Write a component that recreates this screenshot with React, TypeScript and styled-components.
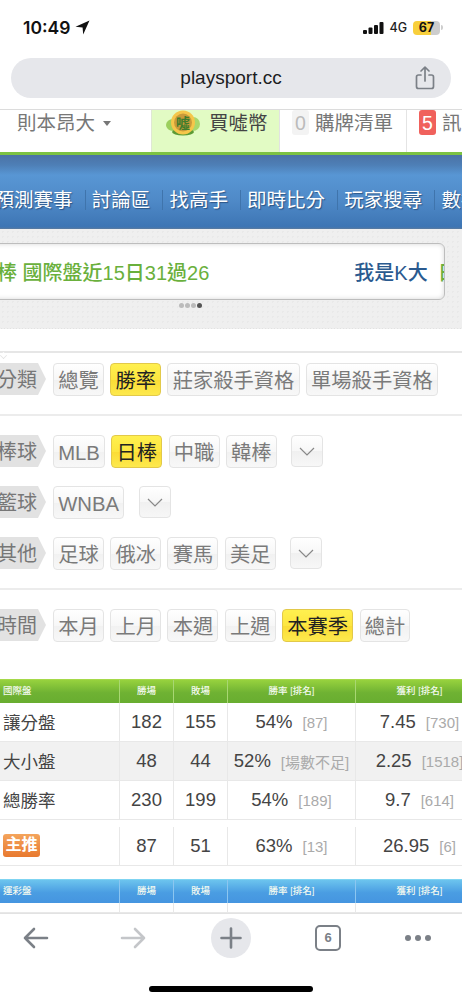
import styled, { createGlobalStyle } from 'styled-components';

const GlobalStyle = createGlobalStyle`
  html, body {
    margin: 0;
    padding: 0;
    background: #fff;
  }
  body {
    font-family: 'Liberation Sans', 'Noto Sans CJK TC', sans-serif;
  }
`;

const Screen = styled.div`
  width: 462px;
  height: 1000px;
  overflow: hidden;
  display: flex;
  flex-direction: column;
  background: #fff;
`;

const StatusBar = styled.div`
  height: 58px;
  flex: none;
  display: flex;
  align-items: center;
  padding: 0 19px 3px 23px;
  box-sizing: border-box;
`;

const Clock = styled.span`
  font-family: Inter, sans-serif;
  font-size: 17.5px;
  font-weight: 600;
  color: #111;
  margin-right: 5px;
`;

const StatusRight = styled.div`
  margin-left: auto;
  display: flex;
  align-items: center;
`;

const NetworkLabel = styled.span`
  font-family: Inter, sans-serif;
  font-size: 12.5px;
  font-weight: 500;
  color: #222;
  margin: 0 6px 0 5px;
`;

const Battery = styled.div`
  width: 27px;
  height: 14px;
  border-radius: 4px;
  background: linear-gradient(90deg, #f8cf3c 67%, #cdcdcd 67%);
  font-family: Inter, sans-serif;
  font-size: 12.5px;
  font-weight: 700;
  line-height: 14px;
  text-align: center;
  color: #111;
`;

const BatteryNub = styled.div`
  width: 2px;
  height: 5px;
  margin-left: 1px;
  border-radius: 0 2px 2px 0;
  background: #cdcdcd;
`;

const UrlWrap = styled.div`
  height: 51px;
  flex: none;
  padding: 0 11px;
  box-sizing: border-box;
`;

const UrlBar = styled.div`
  position: relative;
  height: 40px;
  border-radius: 20px;
  background: #e6e7eb;
  display: flex;
  align-items: center;
  justify-content: center;
  font-size: 19px;
  color: #1c1c1e;
`;

const ShareButton = styled.span`
  position: absolute;
  right: 16px;
  top: 8px;
  line-height: 0;
`;

const TopNav = styled.div`
  height: 46px;
  flex: none;
  box-sizing: border-box;
  display: flex;
  border-top: 1px solid #dcdcdc;
  border-bottom: 3px solid #7cc242;
  font-size: 19.5px;
  color: #777;
  overflow: hidden;
`;

const UserCell = styled.div`
  width: 151px;
  flex: none;
  padding: 0 0 0 17px;
  box-sizing: border-box;
  display: flex;
  align-items: flex-start;
  line-height: 26px;
`;

const Caret = styled.span`
  width: 0;
  height: 0;
  margin: 11px 0 0 8px;
  border-left: 4px solid transparent;
  border-right: 4px solid transparent;
  border-top: 5px solid #777;
`;

const BuyCell = styled.div`
  width: 129px;
  flex: none;
  box-sizing: border-box;
  padding-left: 14px;
  display: flex;
  gap: 9px;
  line-height: 26px;
  background: #e2fbc4;
  border-left: 1px solid #dfe8d4;
  border-right: 1px solid #e2e2e2;
  color: #444;
`;

const CountCell = styled.div<{ $width: number }>`
  width: ${(p) => p.$width}px;
  flex: none;
  box-sizing: border-box;
  padding-left: 12px;
  display: flex;
  gap: 6px;
  line-height: 26px;
  border-right: 1px solid #e4e4e4;
  white-space: nowrap;
`;

const CountBadge = styled.span<{ $alert?: boolean }>`
  width: 17px;
  height: 25px;
  border-radius: 3px;
  text-align: center;
  background: ${(p) => (p.$alert ? '#f0615c' : '#f3f3f3')};
  color: ${(p) => (p.$alert ? '#fff' : '#bbb')};
`;

const MainNav = styled.div`
  height: 74px;
  flex: none;
  box-sizing: border-box;
  padding-top: 35px;
  display: flex;
  align-items: flex-start;
  background: linear-gradient(180deg, #4a72a6 0, #4e7fb6 10px, #5896d4 20px, #4f8ac8 45px, #3d75b4 72px, #5c7b9e 74px);
  overflow: hidden;
`;

const MainNavList = styled.div`
  margin-left: -5.5px;
  display: flex;
  white-space: nowrap;
`;

const MainNavItem = styled.span`
  padding-right: 12px;
  margin-right: 6.2px;
  font-size: 19.5px;
  line-height: 20px;
  color: #fff;
  text-shadow: 1px 1px 1px rgba(20, 50, 90, 0.6);
  border-right: 1px solid #3f74ac;
`;

const TickerBand = styled.div`
  height: 97px;
  flex: none;
  box-sizing: border-box;
  padding-top: 14px;
  background-color: #efefef;
  background-image: radial-gradient(#e9e9e9 1px, transparent 1px);
  background-size: 5px 5px;
`;

const TickerCard = styled.div`
  width: 455px;
  height: 57px;
  margin-left: -10px;
  box-sizing: border-box;
  padding-left: 6px;
  display: flex;
  align-items: center;
  background: #fff;
  border: 1px solid #bdbdbd;
  border-radius: 6px;
  box-shadow: inset 0 0 5px rgba(0, 0, 0, 0.16);
  overflow: hidden;
  white-space: nowrap;
  font-size: 20px;
  font-weight: 500;
`;

const TickerGreen = styled.span`
  flex: none;
  color: #6ab03c;
`;

const TickerBlue = styled.span`
  flex: none;
  color: #2a5a8f;
  margin: 0 10px 0 145px;
`;

const TickerDots = styled.div`
  margin-top: 3px;
  display: flex;
  justify-content: center;
  padding-right: 80px;
`;

const TickerDot = styled.span<{ $active?: boolean }>`
  width: 5px;
  height: 5px;
  border-radius: 50%;
  margin-right: 1px;
  background: ${(p) => (p.$active ? '#555' : '#bbb')};
`;

const WavyEdge = styled.div`
  height: 4px;
  flex: none;
  background-color: #fff;
  background-image: radial-gradient(circle at 3px -1px, #efefef 3.5px, #d9d9d9 4px, transparent 4.5px);
  background-size: 6px 4px;
`;

const FilterPanel = styled.div`
  position: relative;
  margin-top: 21px;
  flex: none;
  border-top: 2px solid #e6e6e6;
  padding-top: 10px;

  &::before {
    content: '';
    position: absolute;
    left: 0;
    top: -1px;
    width: 6px;
    height: 6px;
    background: #fff;
    border-right: 1px solid #e0e0e0;
    border-bottom: 1px solid #e0e0e0;
    transform: rotate(45deg) scale(0.7);
  }
`;

const FilterGroup = styled.div<{ $last?: boolean }>`
  display: flex;
  flex-direction: column;
  gap: 18px;
  padding-bottom: ${(p) => (p.$last ? 0 : 18)}px;
  margin-bottom: ${(p) => (p.$last ? 0 : 19)}px;
  border-bottom: ${(p) => (p.$last ? 'none' : '2px solid #ececec')};
`;

const FilterRow = styled.div`
  height: 33px;
  display: flex;
  gap: 6.3px;
  white-space: nowrap;
`;

const FilterLabel = styled.div`
  width: 49px;
  height: 32px;
  flex: none;
  margin: 0 0.7px 0 -3px;
  font-size: 20px;
  line-height: 34px;
  color: #777;
  background: #e2e2e2;
  clip-path: polygon(0 0, 41px 0, 100% 50%, 41px 100%, 0 100%);
`;

const FilterButton = styled.span<{ $active?: boolean }>`
  height: 33px;
  box-sizing: border-box;
  padding: 0 4.2px;
  border-radius: 4px;
  font-size: 20.3px;
  line-height: 34px;
  text-align: center;
  border: 1px solid ${(p) => (p.$active ? '#e2c94a' : '#e4e4e4')};
  color: ${(p) => (p.$active ? '#222' : '#7a7a7a')};
  background: ${(p) =>
    p.$active
      ? 'linear-gradient(180deg, #fff04f 0, #fde640 50%, #fbdc35 51%, #fde94d 100%)'
      : 'linear-gradient(180deg, #fff 0, #f7f7f7 50%, #f1f1f1 51%, #f8f8f8 100%)'};
`;

const ExpandButton = styled.span<{ $gap: number }>`
  width: 32px;
  height: 32px;
  box-sizing: border-box;
  margin-left: ${(p) => p.$gap}px;
  display: flex;
  align-items: center;
  justify-content: center;
  border: 1px solid #e4e4e4;
  border-radius: 4px;
  background: linear-gradient(180deg, #fff 0, #f7f7f7 50%, #f0f0f0 51%, #f7f7f7 100%);
`;

const TableArea = styled.div`
  margin-top: 37px;
  width: 484px;
  flex: none;
`;

const COLUMNS = '120px 54px 54px 128px 128px';

const HeaderRow = styled.div<{ $tone: 'green' | 'blue' }>`
  height: 24px;
  display: grid;
  grid-template-columns: ${COLUMNS};
  border-top: 1px solid ${(p) => (p.$tone === 'green' ? '#a5d94a' : '#7fd4f2')};
  box-sizing: border-box;
  background: ${(p) =>
    p.$tone === 'green'
      ? 'linear-gradient(180deg, #97d23e 0, #6fb233 55%, #68ad30 100%)'
      : 'linear-gradient(180deg, #6cc4ee 0, #4a9de2 55%, #4595e0 100%)'};
`;

const HeaderCell = styled.div<{ $tone: 'green' | 'blue'; $left?: boolean }>`
  font-size: 9.5px;
  font-weight: 500;
  line-height: 22px;
  color: #f4faf0;
  text-align: ${(p) => (p.$left ? 'left' : 'center')};
  padding-left: ${(p) => (p.$left ? 3 : 0)}px;
  box-sizing: border-box;
  border-right: 1px solid ${(p) => (p.$tone === 'green' ? '#a8d773' : '#8cc6f0')};
`;

const DataRow = styled.div<{ $shaded?: boolean; $height: number }>`
  height: ${(p) => p.$height}px;
  box-sizing: border-box;
  display: grid;
  grid-template-columns: ${COLUMNS};
  border-bottom: 1px solid #e8e8e8;
  background: ${(p) => (p.$shaded ? '#f1f1f1' : '#fff')};
`;

const RowLabel = styled.div`
  padding: 0 0 2px 3px;
  display: flex;
  align-items: center;
  font-size: 17.5px;
  color: #444;
  border-right: 1px solid #e8e8e8;
`;

const NumberCell = styled.div`
  display: flex;
  align-items: center;
  justify-content: center;
  gap: 10px;
  font-size: 18.5px;
  color: #444;
  border-right: 1px solid #e8e8e8;
  white-space: nowrap;
`;

const RankNote = styled.span`
  font-size: 15px;
  color: #aaa;
`;

const PickBadge = styled.span`
  width: 37px;
  height: 23px;
  border-radius: 3px;
  background: linear-gradient(180deg, #f4a45c 0, #e8792f 100%);
  color: #fff;
  font-size: 16px;
  font-weight: 700;
  line-height: 22px;
  text-align: center;
`;

const TableGap = styled.div<{ $height: number }>`
  height: ${(p) => p.$height}px;
`;

const Toolbar = styled.div`
  position: relative;
  flex: none;
  margin-top: auto;
  height: 88px;
  box-sizing: border-box;
  border-top: 1px solid #e2e2e2;
  background: #fff;
  z-index: 1;
`;

const ToolbarIcons = styled.div`
  height: 48px;
  display: grid;
  grid-template-columns: 97px 91px 104px 90px 26px;
  align-items: center;
  padding-left: 23px;
`;

const IconSlot = styled.span`
  line-height: 0;
  display: flex;
  align-items: center;
`;

const NewTabButton = styled.span`
  width: 40px;
  height: 40px;
  border-radius: 50%;
  background: #e6e7eb;
  display: flex;
  align-items: center;
  justify-content: center;
`;

const TabCount = styled.span`
  width: 26px;
  height: 26px;
  box-sizing: border-box;
  border: 2.5px solid #7b8087;
  border-radius: 5px;
  font-size: 13px;
  font-weight: 700;
  line-height: 21px;
  text-align: center;
  color: #7b8087;
`;

const HomeBar = styled.div`
  width: 164px;
  height: 6px;
  margin: 24px auto 0;
  border-radius: 3px;
  background: #000;
`;

const LocationIcon = () => (
  <svg width="15" height="15" viewBox="0 0 15 15">
    <path d="M14.5 0.5 L0.5 6.8 L7.6 7.4 L8.2 14.5 Z" fill="#111" />
  </svg>
);

const SignalIcon = () => (
  <svg width="21" height="12" viewBox="0 0 21 12">
    <rect x="0" y="8" width="4" height="4" rx="1" fill="#111" />
    <rect x="5.5" y="5.5" width="4" height="6.5" rx="1" fill="#111" />
    <rect x="11" y="3" width="4" height="9" rx="1" fill="#111" />
    <rect x="16.5" y="0" width="4" height="12" rx="1" fill="#111" />
  </svg>
);

const ShareIcon = () => (
  <svg width="20" height="24" viewBox="0 0 20 24" fill="none" stroke="#7b8087" strokeWidth="1.7" strokeLinecap="round" strokeLinejoin="round">
    <path d="M6 9 H3.5 Q1.5 9 1.5 11 V20.5 Q1.5 22.5 3.5 22.5 H16.5 Q18.5 22.5 18.5 20.5 V11 Q18.5 9 16.5 9 H14" />
    <path d="M10 15 V1.5 M6 5 L10 1.2 L14 5" />
  </svg>
);

const CoinLogo = () => (
  <svg width="34" height="26" viewBox="0 0 34 26">
    <ellipse cx="7" cy="15" rx="7" ry="6" fill="#9ccf5e" />
    <ellipse cx="27" cy="14" rx="7" ry="7" fill="#a9d86c" />
    <ellipse cx="17" cy="22" rx="11" ry="3.5" fill="#5c9a35" />
    <circle cx="17" cy="12.5" r="12" fill="#f5c64a" />
    <circle cx="17" cy="12.5" r="9" fill="#c99a3a" />
    <text x="17" y="18" fontSize="14" fontWeight="700" fill="#3f7d2c" textAnchor="middle">噓</text>
  </svg>
);

const ChevronIcon = () => (
  <svg width="16" height="9" viewBox="0 0 16 9" fill="none" stroke="#888" strokeWidth="1.2">
    <path d="M1 1 L8 8 L15 1" />
  </svg>
);

const BackIcon = () => (
  <svg width="26" height="22" viewBox="0 0 26 22" fill="none" stroke="#7b8087" strokeWidth="2.6" strokeLinecap="round" strokeLinejoin="round">
    <path d="M2 11 H24 M11 2 L2 11 L11 20" />
  </svg>
);

const ForwardIcon = () => (
  <svg width="26" height="22" viewBox="0 0 26 22" fill="none" stroke="#c4c6c9" strokeWidth="2.6" strokeLinecap="round" strokeLinejoin="round">
    <path d="M2 11 H24 M15 2 L24 11 L15 20" />
  </svg>
);

const PlusIcon = () => (
  <svg width="22" height="22" viewBox="0 0 22 22" stroke="#7b8087" strokeWidth="2.6" strokeLinecap="round">
    <path d="M11 1.5 V20.5 M1.5 11 H20.5" />
  </svg>
);

const MoreIcon = () => (
  <svg width="26" height="6" viewBox="0 0 26 6" fill="#7b8087">
    <circle cx="3" cy="3" r="3" />
    <circle cx="13" cy="3" r="3" />
    <circle cx="23" cy="3" r="3" />
  </svg>
);

const navItems = ['預測賽事', '討論區', '找高手', '即時比分', '玩家搜尋', '數據'];

const filterGroups = [
  [{ label: '分類', items: ['總覽', '勝率', '莊家殺手資格', '單場殺手資格'], active: '勝率' }],
  [
    { label: '棒球', items: ['MLB', '日棒', '中職', '韓棒'], active: '日棒', more: 8 },
    { label: '籃球', items: ['WNBA'], more: 8 },
    { label: '其他', items: ['足球', '俄冰', '賽馬', '美足'], more: 8 }
  ],
  [{ label: '時間', items: ['本月', '上月', '本週', '上週', '本賽季', '總計'], active: '本賽季' }]
];

const tableHead = ['勝場', '敗場', '勝率 [排名]', '獲利 [排名]'];

const stats = [
  { label: '讓分盤', win: 182, lose: 155, rate: '54%', rateRank: '[87]', profit: '7.45', profitRank: '[730]' },
  { label: '大小盤', win: 48, lose: 44, rate: '52%', rateRank: '[場數不足]', profit: '2.25', profitRank: '[1518]', shaded: true },
  { label: '總勝率', win: 230, lose: 199, rate: '54%', rateRank: '[189]', profit: '9.7', profitRank: '[614]' }
];

const App = () => (
  <Screen>
    <GlobalStyle />
    <StatusBar>
      <Clock>10:49</Clock>
      <LocationIcon />
      <StatusRight>
        <SignalIcon />
        <NetworkLabel>4G</NetworkLabel>
        <Battery>67</Battery>
        <BatteryNub />
      </StatusRight>
    </StatusBar>

    <UrlWrap>
      <UrlBar>
        playsport.cc
        <ShareButton>
          <ShareIcon />
        </ShareButton>
      </UrlBar>
    </UrlWrap>

    <TopNav>
      <UserCell>
        則本昂大
        <Caret />
      </UserCell>
      <BuyCell>
        <CoinLogo />
        買噓幣
      </BuyCell>
      <CountCell $width={127}>
        <CountBadge>0</CountBadge>
        購牌清單
      </CountCell>
      <CountCell $width={80}>
        <CountBadge $alert>5</CountBadge>
        訊息
      </CountCell>
    </TopNav>

    <MainNav>
      <MainNavList>
        {navItems.map((item) => (
          <MainNavItem key={item}>{item}</MainNavItem>
        ))}
      </MainNavList>
    </MainNav>

    <TickerBand>
      <TickerCard>
        <TickerGreen>棒 國際盤近15日31過26</TickerGreen>
        <TickerBlue>我是K大</TickerBlue>
        <TickerGreen>日棒</TickerGreen>
      </TickerCard>
      <TickerDots>
        <TickerDot />
        <TickerDot />
        <TickerDot />
        <TickerDot $active />
      </TickerDots>
    </TickerBand>
    <WavyEdge />

    <FilterPanel>
      {filterGroups.map((group, index) => (
        <FilterGroup key={group[0].label} $last={index === filterGroups.length - 1}>
          {group.map((row) => (
            <FilterRow key={row.label}>
              <FilterLabel>{row.label}</FilterLabel>
              {row.items.map((item) => (
                <FilterButton key={item} $active={item === row.active}>
                  {item}
                </FilterButton>
              ))}
              {row.more ? (
                <ExpandButton $gap={row.more}>
                  <ChevronIcon />
                </ExpandButton>
              ) : null}
            </FilterRow>
          ))}
        </FilterGroup>
      ))}
    </FilterPanel>

    <TableArea>
      <HeaderRow $tone="green">
        <HeaderCell $tone="green" $left>
          國際盤
        </HeaderCell>
        {tableHead.map((head) => (
          <HeaderCell key={head} $tone="green">
            {head}
          </HeaderCell>
        ))}
      </HeaderRow>
      {stats.map((row) => (
        <DataRow key={row.label} $height={39} $shaded={row.shaded}>
          <RowLabel>{row.label}</RowLabel>
          <NumberCell>{row.win}</NumberCell>
          <NumberCell>{row.lose}</NumberCell>
          <NumberCell>
            {row.rate}
            <RankNote>{row.rateRank}</RankNote>
          </NumberCell>
          <NumberCell>
            {row.profit}
            <RankNote>{row.profitRank}</RankNote>
          </NumberCell>
        </DataRow>
      ))}
      <TableGap $height={7} />
      <DataRow $height={39}>
        <RowLabel>
          <PickBadge>主推</PickBadge>
        </RowLabel>
        <NumberCell>87</NumberCell>
        <NumberCell>51</NumberCell>
        <NumberCell>
          63%
          <RankNote>[13]</RankNote>
        </NumberCell>
        <NumberCell>
          26.95
          <RankNote>[6]</RankNote>
        </NumberCell>
      </DataRow>
      <TableGap $height={13} />
      <HeaderRow $tone="blue">
        <HeaderCell $tone="blue" $left>
          運彩盤
        </HeaderCell>
        {tableHead.map((head) => (
          <HeaderCell key={head} $tone="blue">
            {head}
          </HeaderCell>
        ))}
      </HeaderRow>
      <DataRow $height={10}>
        <RowLabel />
        <NumberCell />
        <NumberCell />
        <NumberCell />
        <NumberCell />
      </DataRow>
    </TableArea>

    <Toolbar>
      <ToolbarIcons>
        <IconSlot>
          <BackIcon />
        </IconSlot>
        <IconSlot>
          <ForwardIcon />
        </IconSlot>
        <NewTabButton>
          <PlusIcon />
        </NewTabButton>
        <TabCount>6</TabCount>
        <IconSlot>
          <MoreIcon />
        </IconSlot>
      </ToolbarIcons>
      <HomeBar />
    </Toolbar>
  </Screen>
);

export default App;
